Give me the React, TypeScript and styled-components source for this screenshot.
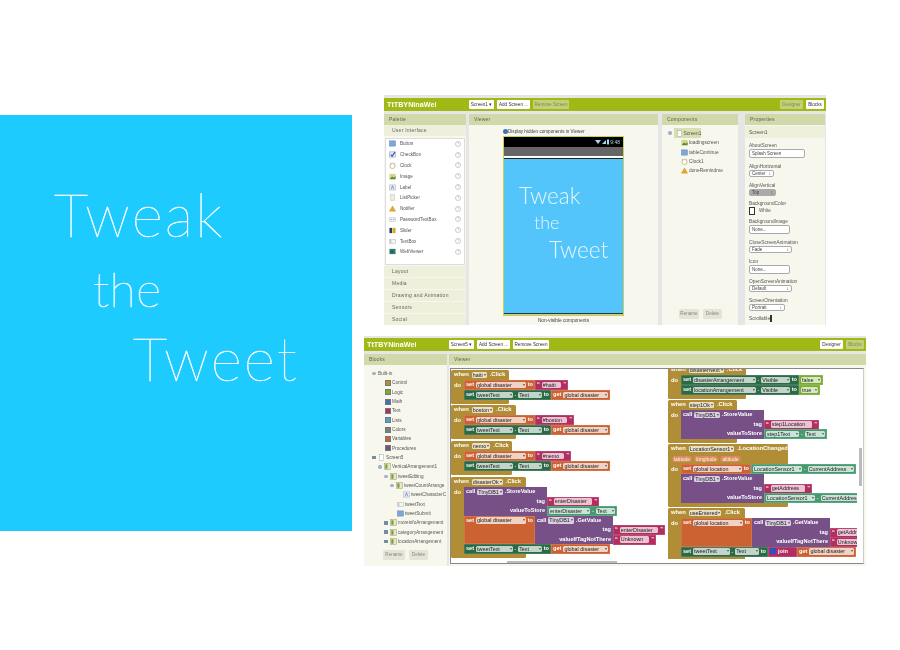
import React from "react";
import styled, { createGlobalStyle } from "styled-components";

const GlobalStyle = createGlobalStyle`
    html, body {
        margin: 0;
        background: #fff;
    }
`;

const BLOCK = {
    gold: "#b18e35",
    orange: "#cc6132",
    dark: "#2a6a45",
    pink: "#b22d60",
    purple: "#775088",
    teal: "#459a70",
    lime: "#78ac2e",
};
type BlockColor = keyof typeof BLOCK;

const Page = styled.div`
    width: 900px;
    height: 650px;
    display: flex;
    overflow: hidden;
    font-family: "Liberation Sans", Arial, sans-serif;
`;

const Hero = styled.section`
    width: 352px;
    height: 416px;
    margin-top: 115px;
    padding: 63px 0 0 54px;
    box-sizing: border-box;
    flex: none;
    background: #1ecbff;
    color: #fff;
`;

const HeroLine = styled.div<{ $size: number; $indent: number; $mt: number }>`
    margin: ${(p) => p.$mt}px 0 0 ${(p) => p.$indent}px;
    font-family: Lato, sans-serif;
    font-weight: 100;
    font-size: ${(p) => p.$size}px;
    line-height: ${(p) => (p.$size === 60 ? 72 : 68)}px;
    letter-spacing: ${(p) => (p.$size === 60 ? 2.2 : 0.6)}px;
    -webkit-text-stroke: 0.45px #fff;
`;

const Shots = styled.div`
    margin: 95px 0 0 12px;
    display: flex;
    flex-direction: column;
    gap: 11px;
`;

const Shot = styled.div<{ $w: number; $ml?: number; $pt: number }>`
    width: ${(p) => p.$w}px;
    height: 230px;
    margin-left: ${(p) => p.$ml ?? 0}px;
    padding-top: ${(p) => p.$pt}px;
    box-sizing: border-box;
    display: flex;
    flex-direction: column;
    overflow: hidden;
    background: #e6e6e6;
    filter: blur(0.35px);
`;

const TopBar = styled.div`
    height: 13px;
    flex: none;
    display: flex;
    align-items: center;
    gap: 3px;
    padding-right: 2px;
    background: #a2b915;
`;

const Brand = styled.div`
    width: 82px;
    padding-left: 3px;
    box-sizing: border-box;
    flex: none;
    color: #fff;
    font-size: 7.2px;
    font-weight: bold;
`;

const BarButton = styled.div<{ $w: number; $off?: boolean; $push?: boolean }>`
    width: ${(p) => p.$w}px;
    height: 9px;
    margin-left: ${(p) => (p.$push ? "auto" : 0)};
    flex: none;
    border-radius: 1px;
    background: ${(p) => (p.$off ? "#c3d07a" : "#fff")};
    color: ${(p) => (p.$off ? "#7d8a55" : "#333")};
    font-size: 4.6px;
    line-height: 9px;
    text-align: center;
`;

const Panels = styled.div`
    flex: 1;
    min-height: 0;
    margin-top: 3px;
    display: flex;
`;

const Panel = styled.div<{ $w: number; $ml?: number }>`
    width: ${(p) => p.$w}px;
    margin-left: ${(p) => p.$ml ?? 0}px;
    flex: none;
    display: flex;
    flex-direction: column;
    overflow: hidden;
    background: #f7f7ee;
`;

const PanelHead = styled.div`
    height: 11px;
    flex: none;
    padding-left: 5px;
    background: #d0d9a9;
    color: #5d6450;
    font-size: 5px;
    line-height: 11px;
    letter-spacing: 0.2px;
`;

const Drawer = styled.div`
    height: 11px;
    flex: none;
    margin-bottom: 1px;
    padding-left: 8px;
    background: #eff0dc;
    color: #666;
    font-size: 5px;
    line-height: 11px;
    letter-spacing: 0.25px;
`;

const PaletteList = styled.div`
    height: 127px;
    flex: none;
    margin: 1px 1px;
    box-sizing: border-box;
    background: #fff;
    border: 1px solid #ddd;
`;

const PaletteRow = styled.div`
    height: 10.8px;
    display: flex;
    align-items: center;
    padding: 0 3px;
    color: #555;
    font-size: 4.6px;
    &:first-child {
        margin-top: -0.5px;
    }
`;

const PaletteName = styled.span`
    margin-left: 4px;
    flex: 1;
`;

const Help = styled.span`
    width: 4px;
    height: 4px;
    border: 0.5px solid #ccc;
    border-radius: 50%;
    color: #aaa;
    font-size: 3px;
    line-height: 4px;
    text-align: center;
`;

const HiddenToggle = styled.div`
    height: 11px;
    padding-top: 1px;
    box-sizing: border-box;
    flex: none;
    display: flex;
    align-items: center;
    margin-left: 34px;
    color: #444;
    font-size: 4.6px;
`;

const HiddenBox = styled.span`
    width: 5px;
    height: 5px;
    border-radius: 50%;
    background: #3f71b5;
`;

const Phone = styled.div`
    width: 121px;
    height: 180px;
    margin-left: 34px;
    flex: none;
    display: flex;
    flex-direction: column;
    box-sizing: border-box;
    border: 0.5px solid #c7cf55;
    background: #cfc88f;
`;

const StatusBar = styled.div`
    height: 10px;
    flex: none;
    display: flex;
    align-items: center;
    justify-content: flex-end;
    gap: 1.5px;
    padding-right: 3px;
    background: #000;
    color: #a8d8ea;
    font-size: 5px;
`;

const TitleBar = styled.div`
    height: 9px;
    flex: none;
    background: #666;
`;

const PhoneRule = styled.div`
    height: 3px;
    flex: none;
    background: linear-gradient(#fff 0 60%, #222 60%);
`;

const PhoneScreen = styled.div`
    height: 155px;
    flex: none;
    padding: 23px 0 0 15px;
    box-sizing: border-box;
    background: #54c5fb;
    border-bottom: 1px solid #1c3a4a;
    color: #e6f6fd;
`;

const PhoneLine = styled.div<{ $size: number; $indent: number }>`
    margin-left: ${(p) => p.$indent}px;
    font-family: Lato, sans-serif;
    font-weight: 300;
    font-size: ${(p) => p.$size}px;
    line-height: 27px;
`;

const Caption = styled.div`
    margin-top: 2px;
    color: #444;
    font-size: 4.8px;
    text-align: center;
`;

const CompTree = styled.div`
    flex: 1;
    padding: 3px 0 0 6px;
`;

const CompRoot = styled.div`
    height: 10px;
    display: flex;
    align-items: center;
    gap: 2px;
    color: #555;
    font-size: 4.8px;
`;

const Selected = styled.span`
    width: 27px;
    height: 10px;
    display: flex;
    align-items: center;
    gap: 1px;
    padding-left: 2px;
    box-sizing: border-box;
    background: #d9dfb0;
`;

const CompChild = styled.div`
    height: 9.4px;
    margin-left: 13px;
    display: flex;
    align-items: center;
    gap: 1px;
    color: #555;
    font-size: 4.8px;
`;

const Toggle = styled.span<{ $square?: boolean }>`
    width: 3.5px;
    height: 3.5px;
    flex: none;
    border-radius: ${(p) => (p.$square ? 0 : "50%")};
    background: ${(p) => (p.$square ? "#6f8fa8" : "#9fb0cc")};
`;

const ButtonRow = styled.div<{ $pad: number; $pb: number }>`
    flex: none;
    display: flex;
    gap: 4px;
    padding: 0 0 ${(p) => p.$pb}px ${(p) => p.$pad}px;
`;

const GhostButton = styled.div<{ $w: number }>`
    width: ${(p) => p.$w}px;
    height: 10px;
    border-radius: 1.5px;
    background: #e4e4d8;
    color: #888;
    font-size: 4.6px;
    line-height: 10px;
    text-align: center;
`;

const SelectedName = styled.div`
    height: 12px;
    flex: none;
    margin-top: 1px;
    padding-left: 4px;
    background: #eff0dc;
    color: #555;
    font-size: 5px;
    line-height: 12px;
`;

const PropList = styled.div`
    padding: 3.5px 0 0 4px;
`;

const Prop = styled.div<{ $h: number }>`
    height: ${(p) => p.$h}px;
    color: #555;
    font-size: 4.8px;
    line-height: 7px;
`;

const PropInput = styled.div<{ $w: number; $h: number; $grey?: boolean }>`
    width: ${(p) => p.$w}px;
    height: ${(p) => p.$h}px;
    display: flex;
    justify-content: space-between;
    padding: 0 2px;
    box-sizing: border-box;
    border: 0.5px solid #aaa;
    border-radius: 2px;
    background: ${(p) => (p.$grey ? "#aaa" : "#fff")};
    color: #444;
    font-size: 4.5px;
    line-height: ${(p) => p.$h - 1}px;
`;

const ColorRow = styled.div`
    display: flex;
    align-items: center;
    gap: 4px;
    font-size: 4.6px;
`;

const ColorSwatch = styled.span`
    width: 4px;
    height: 6px;
    border: 0.5px solid #333;
    background: #fff;
`;

const TreeBody = styled.div`
    flex: 1;
    min-height: 0;
    padding-top: 4px;
    overflow: hidden;
`;

const TreeRow = styled.div<{ $indent: number }>`
    height: 9.33px;
    display: flex;
    align-items: center;
    gap: 1px;
    padding-left: ${(p) => p.$indent}px;
    color: #555;
    font-size: 4.7px;
    white-space: nowrap;
    ${Toggle} {
        margin-right: 1.5px;
    }
`;

const Swatch = styled.span<{ $c: string }>`
    width: 6px;
    height: 6px;
    flex: none;
    box-sizing: border-box;
    border: 0.5px solid #777;
    background: ${(p) => p.$c};
`;

const Canvas = styled.div`
    position: relative;
    flex: 1;
    margin: 3px 2px 2px 1px;
    background: #fff;
    border: 1px solid #888;
    border-right-color: #ccc;
`;

const Workspace = styled.div`
    position: relative;
    width: 406px;
    height: 190px;
    overflow: hidden;
`;

const ScrollBar = styled.div<{ $horizontal?: boolean }>`
    position: absolute;
    background: #bbb;
    ${(p) =>
        p.$horizontal
            ? "left: 56px; bottom: 0; width: 110px; height: 2.5px;"
            : "left: 408px; top: 79px; width: 2.5px; height: 38px;"}
`;

const Event = styled.div<{ $x: number; $y: number }>`
    position: absolute;
    left: ${(p) => p.$x}px;
    top: ${(p) => p.$y}px;
    display: flex;
    flex-direction: column;
`;

const EventHead = styled.div<{ $w: number }>`
    width: ${(p) => p.$w}px;
    height: 10px;
    display: flex;
    align-items: flex-start;
    gap: 3px;
    padding-left: 3px;
    box-sizing: border-box;
    border-radius: 1.5px 1.5px 0 0;
    background: ${BLOCK.gold};
    color: #fff;
    font-size: 5.8px;
    font-weight: bold;
    line-height: 9.5px;
    white-space: nowrap;
`;

const EventBody = styled.div`
    display: flex;
`;

const Arm = styled.div`
    width: 13px;
    flex: none;
    padding-left: 3px;
    box-sizing: border-box;
    background: ${BLOCK.gold};
    color: #fff;
    font-size: 5.8px;
    font-weight: bold;
    line-height: 10px;
`;

const EventFoot = styled.div<{ $w: number }>`
    width: ${(p) => p.$w}px;
    height: 4px;
    border-radius: 0 0 1.5px 1.5px;
    background: ${BLOCK.gold};
`;

const Stack = styled.div`
    display: flex;
    flex-direction: column;
`;

const Row = styled.div`
    display: flex;
`;

const Piece = styled.div<{ $c: BlockColor; $w: number; $h?: number }>`
    width: ${(p) => p.$w}px;
    height: ${(p) => p.$h ?? 10}px;
    flex: none;
    display: flex;
    align-items: flex-start;
    gap: 2px;
    padding: 0 2px;
    box-sizing: border-box;
    overflow: hidden;
    background: ${(p) => BLOCK[p.$c]};
    box-shadow: inset 0 0 0 0.5px rgba(255, 255, 255, 0.25);
    color: #fff;
    font-size: 5.6px;
    font-weight: bold;
    line-height: 9.5px;
    white-space: nowrap;
`;

const Fld = styled.span<{ $grow?: boolean }>`
    height: 6.5px;
    margin-top: 1.5px;
    flex: ${(p) => (p.$grow ? "1 1 auto" : "none")};
    display: flex;
    justify-content: space-between;
    padding: 0 1px;
    border-radius: 1.5px;
    background: rgba(255, 255, 255, 0.72);
    color: #222;
    font-size: 5.4px;
    font-weight: normal;
    line-height: 6.5px;
    overflow: hidden;
`;

const Arrow = styled.span`
    margin-left: 1px;
    color: #555;
    font-size: 4px;
`;

const CallRow = styled.div`
    height: 9.5px;
    display: flex;
`;

const CallCell = styled.div<{ $w: number; $right?: boolean }>`
    width: ${(p) => p.$w}px;
    flex: none;
    display: flex;
    justify-content: ${(p) => (p.$right ? "flex-end" : "flex-start")};
    gap: 2px;
    padding: 0 2px;
    box-sizing: border-box;
    background: ${BLOCK.purple};
    color: #fff;
    font-size: 5.6px;
    font-weight: bold;
    line-height: 9.5px;
    white-space: nowrap;
`;

const ParamRow = styled(EventHead)`
    gap: 2px;
    padding-left: 4px;
    border-radius: 0;
`;

const Param = styled.span`
    height: 6.5px;
    margin-top: 1.5px;
    padding: 0 2px;
    border-radius: 3px;
    background: #d98b62;
    color: #fff0e0;
    font-size: 5px;
    font-weight: normal;
    line-height: 6.5px;
`;

const Mutator = styled.span`
    width: 6px;
    height: 6px;
    margin-top: 1.5px;
    flex: none;
    border-radius: 1px;
    background: #2b50c8;
`;

type IconKind =
    | "button"
    | "check"
    | "clock"
    | "image"
    | "label"
    | "list"
    | "warn"
    | "pass"
    | "slider"
    | "text"
    | "web"
    | "screen"
    | "box";

function CompIcon({ kind }: { kind: IconKind }) {
    return (
        <svg width="7" height="7" viewBox="0 0 8 8" style={{ flex: "none" }}>
            {kind === "button" && <rect x="0.5" y="1" width="7" height="6" fill="#7fa6d8" stroke="#5c7fb0" strokeWidth="0.5" />}
            {kind === "check" && (
                <>
                    <rect x="0.5" y="1" width="7" height="6" fill="#dfe6f2" stroke="#88a" strokeWidth="0.5" />
                    <path d="M2 4l1.5 2L7 1" fill="none" stroke="#2a55b5" strokeWidth="1.2" />
                </>
            )}
            {kind === "clock" && (
                <>
                    <circle cx="4" cy="4.5" r="3" fill="#fff" stroke="#b9a16a" strokeWidth="0.8" />
                    <path d="M1.5 1.5l1 1M6.5 1.5l-1 1" stroke="#c86" strokeWidth="0.8" />
                </>
            )}
            {kind === "image" && (
                <>
                    <rect x="0.5" y="1" width="7" height="6" fill="#cfd98a" />
                    <path d="M0.5 7l3-3 2 1.5 2-2V7z" fill="#5c8a2a" />
                </>
            )}
            {kind === "label" && (
                <>
                    <rect x="0.5" y="1" width="7" height="6" fill="#e3e8f5" stroke="#aab" strokeWidth="0.5" />
                    <path d="M2.5 6L4 2l1.5 4" fill="none" stroke="#5573b8" strokeWidth="0.7" />
                </>
            )}
            {kind === "list" && <rect x="1.5" y="0.5" width="5" height="7" fill="#eeeedd" stroke="#bbb" strokeWidth="0.5" />}
            {kind === "warn" && <path d="M4 1l3.5 6h-7z" fill="#e8a923" stroke="#b57f14" strokeWidth="0.4" />}
            {kind === "pass" && (
                <>
                    <rect x="0.5" y="2" width="7" height="4" fill="#eef" stroke="#bbb" strokeWidth="0.5" />
                    <path d="M2 4h1M5 4h1" stroke="#667" strokeWidth="0.9" />
                </>
            )}
            {kind === "slider" && (
                <>
                    <rect x="0.5" y="1" width="3" height="6" fill="#2d3a55" />
                    <rect x="4" y="1" width="3.5" height="6" fill="#d6a832" />
                </>
            )}
            {kind === "text" && (
                <>
                    <rect x="0.5" y="1.5" width="7" height="5" fill="#f3f3f3" stroke="#aaa" strokeWidth="0.5" />
                    <path d="M2 2.5v3" stroke="#777" strokeWidth="0.6" />
                </>
            )}
            {kind === "web" && (
                <>
                    <rect x="0.5" y="1" width="7" height="6" fill="#2f8a4a" />
                    <circle cx="3.5" cy="4" r="2" fill="#2a55b5" />
                </>
            )}
            {kind === "screen" && <rect x="1.5" y="0.5" width="5" height="7" fill="#fff" stroke="#999" strokeWidth="0.5" />}
            {kind === "box" && (
                <>
                    <rect x="0.5" y="0.5" width="7" height="7" fill="#e4e8c4" stroke="#88935a" strokeWidth="0.5" />
                    <rect x="1.5" y="1.5" width="2.5" height="5" fill="#7d9a3d" />
                </>
            )}
        </svg>
    );
}

const paletteItems: [string, IconKind][] = [
    ["Button", "button"],
    ["CheckBox", "check"],
    ["Clock", "clock"],
    ["Image", "image"],
    ["Label", "label"],
    ["ListPicker", "list"],
    ["Notifier", "warn"],
    ["PasswordTextBox", "pass"],
    ["Slider", "slider"],
    ["TextBox", "text"],
    ["WebViewer", "web"],
];

type PropItem = {
    label: string;
    h: number;
    kind: "area" | "select" | "color" | "input" | "check";
    value?: string;
    w?: number;
    grey?: boolean;
};

const propItems: PropItem[] = [
    { label: "AboutScreen", h: 21, kind: "area", value: "Splash Screen", w: 56 },
    { label: "AlignHorizontal", h: 19, kind: "select", value: "Center", w: 25 },
    { label: "AlignVertical", h: 18, kind: "select", value: "Top", w: 27, grey: true },
    { label: "BackgroundColor", h: 18, kind: "color", value: "White" },
    { label: "BackgroundImage", h: 21, kind: "input", value: "None...", w: 41 },
    { label: "CloseScreenAnimation", h: 19, kind: "select", value: "Fade", w: 43 },
    { label: "Icon", h: 20, kind: "input", value: "None...", w: 41 },
    { label: "OpenScreenAnimation", h: 19, kind: "select", value: "Default", w: 43 },
    { label: "ScreenOrientation", h: 18, kind: "select", value: "Portrait", w: 36 },
    { label: "Scrollable", h: 12, kind: "check" },
];

type TreeItem = {
    label: string;
    indent: number;
    toggle?: "round" | "square";
    color?: string;
    icon?: IconKind;
};

const treeItems: TreeItem[] = [
    { label: "Built-in", indent: 8, toggle: "round" },
    { label: "Control", indent: 21, color: BLOCK.gold },
    { label: "Logic", indent: 21, color: BLOCK.lime },
    { label: "Math", indent: 21, color: "#3f71b5" },
    { label: "Text", indent: 21, color: BLOCK.pink },
    { label: "Lists", indent: 21, color: "#49a6d4" },
    { label: "Colors", indent: 21, color: "#7d7d7d" },
    { label: "Variables", indent: 21, color: "#d05f2d" },
    { label: "Procedures", indent: 21, color: BLOCK.purple },
    { label: "Screen5", indent: 8, toggle: "square", icon: "screen" },
    { label: "VerticalArrangement1", indent: 14, toggle: "round", icon: "box" },
    { label: "tweetEditing", indent: 20, toggle: "round", icon: "box" },
    { label: "tweetCountArrange", indent: 26, toggle: "round", icon: "box" },
    { label: "tweetCharacterC", indent: 39, icon: "label" },
    { label: "tweetText", indent: 33, icon: "text" },
    { label: "tweetSubmit", indent: 33, icon: "button" },
    { label: "moreinfoArrangement", indent: 20, toggle: "square", icon: "box" },
    { label: "categoryArrangement", indent: 20, toggle: "square", icon: "box" },
    { label: "locationArrangement", indent: 20, toggle: "square", icon: "box" },
];

function Drop({ children }: { children: React.ReactNode }) {
    return (
        <Fld $grow>
            {children}
            <Arrow>▾</Arrow>
        </Fld>
    );
}

function Lit({ text, c = "pink", w }: { text: string; c?: BlockColor; w: number }) {
    return (
        <Piece $c={c} $w={w}>
            “<Fld $grow>{text}</Fld>”
        </Piece>
    );
}

function SetVar({ name, w = 71, h }: { name: string; w?: number; h?: number }) {
    return (
        <Piece $c="orange" $w={w} $h={h}>
            set <Drop>{name}</Drop> to
        </Piece>
    );
}

function GetVar() {
    return (
        <Piece $c="orange" $w={59}>
            get <Drop>global disaster</Drop>
        </Piece>
    );
}

function SetProp({ target, prop, w = 87 }: { target: string; prop: string; w?: number }) {
    return (
        <Piece $c="dark" $w={w}>
            set <Drop>{target}</Drop> . <Drop>{prop}</Drop> to
        </Piece>
    );
}

function Getter({ target, prop, w }: { target: string; prop: string; w: number }) {
    return (
        <Piece $c="teal" $w={w}>
            <Drop>{target}</Drop> . <Drop>{prop}</Drop>
        </Piece>
    );
}

function TweetFromVar() {
    return (
        <Row>
            <SetProp target="tweetText" prop="Text" />
            <GetVar />
        </Row>
    );
}

function When({ x, y, w, name, action = ".Click", children }: {
    x: number;
    y: number;
    w: number;
    name: string;
    action?: string;
    children: React.ReactNode;
}) {
    return (
        <Event $x={x} $y={y}>
            <EventHead $w={w}>
                when <Fld>{name}<Arrow>▾</Arrow></Fld> {action}
            </EventHead>
            <EventBody>
                <Arm>do</Arm>
                <Stack>{children}</Stack>
            </EventBody>
            <EventFoot $w={w} />
        </Event>
    );
}

function CallHead({ w, method }: { w: number; method: string }) {
    return (
        <CallRow>
            <CallCell $w={w}>
                call <Fld>TinyDB1<Arrow>▾</Arrow></Fld> {method}
            </CallCell>
        </CallRow>
    );
}

function CallArg({ w, label, children }: { w: number; label: string; children: React.ReactNode }) {
    return (
        <CallRow>
            <CallCell $w={w} $right>
                {label}
            </CallCell>
            {children}
        </CallRow>
    );
}

function DesignerShot() {
    return (
        <Shot $w={442} $ml={20} $pt={3}>
            <TopBar>
                <Brand>TtTBYNinaWei</Brand>
                <BarButton $w={25}>Screen1 ▾</BarButton>
                <BarButton $w={33}>Add Screen ...</BarButton>
                <BarButton $w={36} $off>Remove Screen</BarButton>
                <BarButton $w={23} $off $push>Designer</BarButton>
                <BarButton $w={18}>Blocks</BarButton>
            </TopBar>
            <Panels>
                <Panel $w={82}>
                    <PanelHead>Palette</PanelHead>
                    <Drawer>User Interface</Drawer>
                    <PaletteList>
                        {paletteItems.map(([name, kind]) => (
                            <PaletteRow key={name}>
                                <CompIcon kind={kind} />
                                <PaletteName>{name}</PaletteName>
                                <Help>?</Help>
                            </PaletteRow>
                        ))}
                    </PaletteList>
                    <Drawer>Layout</Drawer>
                    <Drawer>Media</Drawer>
                    <Drawer>Drawing and Animation</Drawer>
                    <Drawer>Sensors</Drawer>
                    <Drawer>Social</Drawer>
                </Panel>
                <Panel $w={189} $ml={3}>
                    <PanelHead>Viewer</PanelHead>
                    <HiddenToggle>
                        <HiddenBox />
                        Display hidden components in Viewer
                    </HiddenToggle>
                    <Phone>
                        <StatusBar>
                            <svg width="14" height="6" viewBox="0 0 14 6">
                                <path d="M0 1h6L3 5zM7 5l4-4v4zM12 0.500h2v5h-2z" fill="#a8d8ea" />
                            </svg>
                            9:48
                        </StatusBar>
                        <TitleBar />
                        <PhoneRule />
                        <PhoneScreen>
                            <PhoneLine $size={22.5} $indent={0}>Tweak</PhoneLine>
                            <PhoneLine $size={18} $indent={15}>the</PhoneLine>
                            <PhoneLine $size={22.5} $indent={30}>Tweet</PhoneLine>
                        </PhoneScreen>
                    </Phone>
                    <Caption>Non-visible components</Caption>
                </Panel>
                <Panel $w={76} $ml={4}>
                    <PanelHead>Components</PanelHead>
                    <CompTree>
                        <CompRoot>
                            <Toggle />
                            <Selected>
                                <CompIcon kind="screen" />
                                Screen1
                            </Selected>
                        </CompRoot>
                        <CompChild><CompIcon kind="image" />loadingscreen</CompChild>
                        <CompChild><CompIcon kind="button" />tableContinue</CompChild>
                        <CompChild><CompIcon kind="clock" />Clock1</CompChild>
                        <CompChild><CompIcon kind="warn" />doneRemindme</CompChild>
                    </CompTree>
                    <ButtonRow $pad={17} $pb={6}>
                        <GhostButton $w={20}>Rename</GhostButton>
                        <GhostButton $w={19}>Delete</GhostButton>
                    </ButtonRow>
                </Panel>
                <Panel $w={80} $ml={7}>
                    <PanelHead>Properties</PanelHead>
                    <SelectedName>Screen1</SelectedName>
                    <PropList>
                        {propItems.map((item) => (
                            <Prop key={item.label} $h={item.h}>
                                {item.label}
                                {item.kind === "color" && (
                                    <ColorRow>
                                        <ColorSwatch />
                                        {item.value}
                                    </ColorRow>
                                )}
                                {(item.kind === "area" || item.kind === "input") && (
                                    <PropInput $w={item.w ?? 40} $h={9.5}>{item.value}</PropInput>
                                )}
                                {item.kind === "select" && (
                                    <PropInput $w={item.w ?? 40} $h={7.5} $grey={item.grey}>
                                        {item.value}
                                        <span>↕</span>
                                    </PropInput>
                                )}
                                {item.kind === "check" && <ColorSwatch />}
                            </Prop>
                        ))}
                    </PropList>
                </Panel>
            </Panels>
        </Shot>
    );
}

function BlocksShot() {
    return (
        <Shot $w={502} $pt={2}>
            <TopBar>
                <Brand>TtTBYNinaWei</Brand>
                <BarButton $w={25}>Screen5 ▾</BarButton>
                <BarButton $w={33}>Add Screen ...</BarButton>
                <BarButton $w={36}>Remove Screen</BarButton>
                <BarButton $w={23} $push>Designer</BarButton>
                <BarButton $w={18} $off>Blocks</BarButton>
            </TopBar>
            <Panels>
                <Panel $w={83}>
                    <PanelHead>Blocks</PanelHead>
                    <TreeBody>
                        {treeItems.map((item) => (
                            <TreeRow key={item.label} $indent={item.indent}>
                                {item.toggle && <Toggle $square={item.toggle === "square"} />}
                                {item.color && <Swatch $c={item.color} />}
                                {item.icon && <CompIcon kind={item.icon} />}
                                {item.label}
                            </TreeRow>
                        ))}
                    </TreeBody>
                    <ButtonRow $pad={19} $pb={6}>
                        <GhostButton $w={22}>Rename</GhostButton>
                        <GhostButton $w={19}>Delete</GhostButton>
                    </ButtonRow>
                </Panel>
                <Panel $w={417} $ml={2}>
                    <PanelHead>Viewer</PanelHead>
                    <Canvas>
                        <Workspace>
                            <When x={0} y={1} w={58} name="haiti">
                                <Row>
                                    <SetVar name="global disaster" />
                                    <Lit text="#haiti" w={33} />
                                </Row>
                                <TweetFromVar />
                            </When>
                            <When x={0} y={36} w={65} name="boston">
                                <Row>
                                    <SetVar name="global disaster" />
                                    <Lit text="#boston" w={39} />
                                </Row>
                                <TweetFromVar />
                            </When>
                            <When x={0} y={72} w={61} name="nemo">
                                <Row>
                                    <SetVar name="global disaster" />
                                    <Lit text="#nemo" w={36} />
                                </Row>
                                <TweetFromVar />
                            </When>
                            <When x={0} y={108} w={75} name="disasterOk">
                                <Stack>
                                    <CallHead w={83} method=".StoreValue" />
                                    <CallArg w={83} label="tag">
                                        <Lit text="enterDisaster" w={52} />
                                    </CallArg>
                                    <CallArg w={83} label="valueToStore">
                                        <Getter target="enterDisaster" prop="Text" w={70} />
                                    </CallArg>
                                </Stack>
                                <Row>
                                    <SetVar name="global disaster" h={28.5} />
                                    <Stack>
                                        <CallHead w={78} method=".GetValue" />
                                        <CallArg w={78} label="tag">
                                            <Lit text="enterDisaster" w={52} />
                                        </CallArg>
                                        <CallArg w={78} label="valueIfTagNotThere">
                                            <Lit text="Unknown" w={43} />
                                        </CallArg>
                                    </Stack>
                                </Row>
                                <TweetFromVar />
                            </When>
                            <When x={217} y={-4} w={78} name="disasterNext">
                                <Row>
                                    <SetProp target="disasterArrangement" prop="Visible" w={118} />
                                    <Piece $c="lime" $w={24}><Drop>false</Drop></Piece>
                                </Row>
                                <Row>
                                    <SetProp target="locationArrangement" prop="Visible" w={118} />
                                    <Piece $c="lime" $w={21}><Drop>true</Drop></Piece>
                                </Row>
                            </When>
                            <When x={217} y={31} w={69} name="step1Ok">
                                <CallHead w={83} method=".StoreValue" />
                                <CallArg w={83} label="tag">
                                    <Lit text="step1Location" w={55} />
                                </CallArg>
                                <CallArg w={83} label="valueToStore">
                                    <Getter target="step1Text" prop="Text" w={63} />
                                </CallArg>
                            </When>
                            <Event $x={217} $y={75}>
                                <EventHead $w={120}>
                                    when <Fld>LocationSensor1<Arrow>▾</Arrow></Fld> .LocationChanged
                                </EventHead>
                                <ParamRow $w={120}>
                                    <Param>latitude</Param>
                                    <Param>longitude</Param>
                                    <Param>altitude</Param>
                                </ParamRow>
                                <EventBody>
                                    <Arm>do</Arm>
                                    <Stack>
                                        <Row>
                                            <SetVar name="global location" w={70} />
                                            <Getter target="LocationSensor1" prop="CurrentAddress" w={105} />
                                        </Row>
                                        <CallHead w={83} method=".StoreValue" />
                                        <CallArg w={83} label="tag">
                                            <Lit text="getAddress" w={48} />
                                        </CallArg>
                                        <CallArg w={83} label="valueToStore">
                                            <Getter target="LocationSensor1" prop="CurrentAddress" w={105} />
                                        </CallArg>
                                    </Stack>
                                </EventBody>
                                <EventFoot $w={120} />
                            </Event>
                            <When x={217} y={139} w={77} name="useEntered">
                                <Row>
                                    <SetVar name="global location" w={71} h={28.5} />
                                    <Stack>
                                        <CallHead w={78} method=".GetValue" />
                                        <CallArg w={78} label="tag">
                                            <Lit text="getAddress" w={48} />
                                        </CallArg>
                                        <CallArg w={78} label="valueIfTagNotThere">
                                            <Lit text="Unknown" w={43} />
                                        </CallArg>
                                    </Stack>
                                </Row>
                                <Row>
                                    <SetProp target="tweetText" prop="Text" />
                                    <Piece $c="pink" $w={29}>
                                        <Mutator />
                                        join
                                    </Piece>
                                    <GetVar />
                                </Row>
                            </When>
                        </Workspace>
                        <ScrollBar $horizontal />
                        <ScrollBar />
                    </Canvas>
                </Panel>
            </Panels>
        </Shot>
    );
}

export default function App() {
    return (
        <Page>
            <GlobalStyle />
            <Hero>
                <HeroLine $size={60} $indent={0} $mt={0}>Tweak</HeroLine>
                <HeroLine $size={48} $indent={39} $mt={5}>the</HeroLine>
                <HeroLine $size={60} $indent={79} $mt={-1}>Tweet</HeroLine>
            </Hero>
            <Shots>
                <DesignerShot />
                <BlocksShot />
            </Shots>
        </Page>
    );
}
